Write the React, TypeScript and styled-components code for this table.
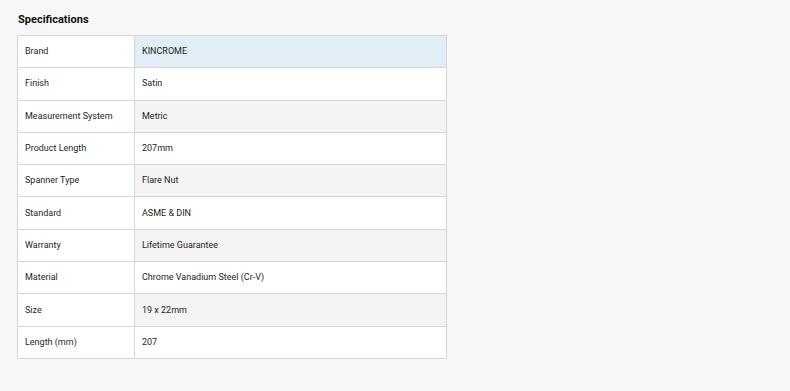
import React from "react";
import styled, { createGlobalStyle } from "styled-components";

const Global = createGlobalStyle`
  html, body { margin: 0; padding: 0; background: #f7f7f7; }
  body { font-family: Roboto, "Liberation Sans", sans-serif; color: #222; }
`;

const Page = styled.div`
  padding: 13px 17px 0 17px;
  width: 430px;
`;

const Title = styled.h3`
  margin: 0 0 8px 1px;
  font-size: 11px;
  font-weight: 700;
  line-height: 14px;
  color: #111;
`;

const Table = styled.table`
  border-collapse: collapse;
  width: 430px;
  table-layout: fixed;
  background: #fff;
`;

const Row = styled.tr``;

const Label = styled.td`
  width: 117px;
  border: 1px solid #d6d6d6;
  height: 32.3px;
  padding: 0 0 1px 7px;
  font-size: 9px;
  color: #1e1e1e;
  background: #fff;
  vertical-align: middle;
  box-sizing: border-box;
`;

const Value = styled.td<{ $tone: "blue" | "grey" | "white" }>`
  border: 1px solid #d6d6d6;
  height: 32.3px;
  padding: 0 0 1px 7px;
  font-size: 9px;
  color: #1e1e1e;
  vertical-align: middle;
  box-sizing: border-box;
  background: ${(p) =>
    p.$tone === "blue" ? "#e2eef5" : p.$tone === "grey" ? "#f4f4f4" : "#fff"};
`;

const specs: [string, string][] = [
  ["Brand", "KINCROME"],
  ["Finish", "Satin"],
  ["Measurement System", "Metric"],
  ["Product Length", "207mm"],
  ["Spanner Type", "Flare Nut"],
  ["Standard", "ASME & DIN"],
  ["Warranty", "Lifetime Guarantee"],
  ["Material", "Chrome Vanadium Steel (Cr-V)"],
  ["Size", "19 x 22mm"],
  ["Length (mm)", "207"],
];

export default function App() {
  return (
    <>
      <Global />
      <Page>
        <Title>Specifications</Title>
        <Table>
          <tbody>
            {specs.map(([k, v], i) => (
              <Row key={k}>
                <Label>{k}</Label>
                <Value $tone={i === 0 ? "blue" : i % 2 === 0 ? "grey" : "white"}>{v}</Value>
              </Row>
            ))}
          </tbody>
        </Table>
      </Page>
    </>
  );
}
